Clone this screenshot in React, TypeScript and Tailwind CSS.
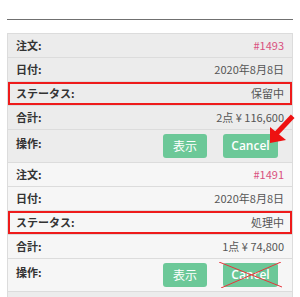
const font = { fontFamily: '"Noto Sans CJK JP", "Noto Sans", sans-serif' }

type Order = {
  id: string
  date: string
  status: string
  total: string
  shade: string
  crossed?: boolean
}

const orders: Order[] = [
  { id: '#1493', date: '2020年8月8日', status: '保留中', total: '2点 ¥ 116,600', shade: 'bg-[#ececec]' },
  { id: '#1491', date: '2020年8月8日', status: '処理中', total: '1点 ¥ 74,800', shade: 'bg-[#f6f6f6]', crossed: true },
]

function Row({ label, children, className = '' }: { label: string; children: React.ReactNode; className?: string }) {
  return (
    <div className={`flex h-[24px] items-center justify-between border-b border-[#dcdcdc] px-2 text-[11px] ${className}`}>
      <span className="font-bold text-[#333]">{label}</span>
      <span className="text-[#555]">{children}</span>
    </div>
  )
}

function OrderBlock({ order, first }: { order: Order; first: boolean }) {
  return (
    <div className={order.shade}>
      <Row label="注文:">
        <span className="text-[#d9517f]">{order.id}</span>
      </Row>
      <Row label="日付:">{order.date}</Row>
      <Row label="ステータス:" className="ring-2 ring-inset ring-[#ee1b1b]">
        {order.status}
      </Row>
      <Row label="合計:">{order.total}</Row>
      <div className="flex h-[33px] justify-between border-b border-[#dcdcdc] px-2 text-[11px]">
        <span className="mt-[5px] font-bold text-[#333]">操作:</span>
        <div className="mt-[4px] flex gap-4 pr-[6px]">
          <button className="h-[24px] w-[44px] rounded-[3px] bg-[#6cc898] text-[12px] text-white">表示</button>
          <div className="relative">
            <button
              className="h-[24px] w-[55px] rounded-[3px] bg-[#6cc898] text-[12px] font-semibold text-white"
              style={{ fontFamily: '"Open Sans", sans-serif' }}
            >
              Cancel
            </button>
            {first && (
              <svg className="absolute left-[44px] top-[-20px]" width="28" height="32" viewBox="0 0 28 32">
                <path d="M24 4 L9 20" stroke="#ee1111" strokeWidth="5" strokeLinecap="square" />
                <polygon points="3,29 3,13 19,26" fill="#ee1111" />
              </svg>
            )}
            {order.crossed && (
              <svg className="absolute left-[-4px] top-[-1px]" width="64" height="26" viewBox="0 0 64 26">
                <line x1="0" y1="0" x2="63" y2="25" stroke="#e8343b" strokeWidth="1" />
                <line x1="62" y1="0" x2="2" y2="26" stroke="#e8343b" strokeWidth="1" />
              </svg>
            )}
          </div>
        </div>
      </div>
    </div>
  )
}

export default function App() {
  return (
    <div className="h-[297px] overflow-hidden bg-white px-[7px] pt-[19px]" style={font}>
      <div className="h-px w-full bg-[#707070]" />
      <div className="mt-[13px] border-x border-t border-[#dcdcdc]">
        {orders.map((o, i) => (
          <OrderBlock key={o.id} order={o} first={i === 0} />
        ))}
        <div className="h-[24px] bg-[#ececec]" />
      </div>
    </div>
  )
}
